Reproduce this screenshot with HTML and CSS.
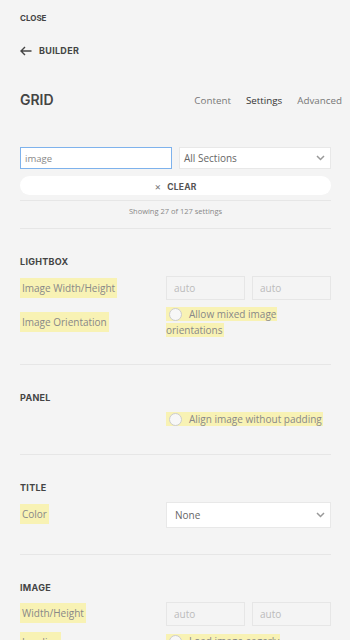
FILE: index.html
```html
<!DOCTYPE html>
<html lang="en">
  <head>
    <meta charset="UTF-8" />
    <meta name="viewport" content="width=device-width, initial-scale=1.0" />
    <title>Builder - Grid</title>
    <link rel="stylesheet" href="styles.css">
  </head>
  <body>
    <div class="sidebar">
      <a class="close-link" href="#">Close</a>

      <a class="back-link" href="#">
        <svg width="12" height="10" viewBox="0 0 12 10">
          <path d="M11.5 5H1M5 1L1 5l4 4" fill="none" stroke="#444" stroke-width="1.4" />
        </svg>
        Builder
      </a>

      <div class="title-row">
        <h2>Grid</h2>
        <ul class="tabs">
          <li>Content</li>
          <li class="active">Settings</li>
          <li>Advanced</li>
        </ul>
      </div>

      <div class="search-row">
        <input type="text" class="search-input" value="image" />
        <div class="select">
          <span>All Sections</span>
          <svg width="9" height="6" viewBox="0 0 9 6">
            <path d="M1 1l3.5 3.5L8 1" fill="none" stroke="#999" stroke-width="1.5" />
          </svg>
        </div>
      </div>
      <button class="clear-btn"><span class="x">&times;</span>Clear</button>
      <p class="count">Showing 27 of 127 settings</p>

      <div class="section">
        <h3>Lightbox</h3>
        <div class="field">
          <label><mark>Image Width/Height</mark></label>
          <div class="pair">
            <input type="text" placeholder="auto" />
            <input type="text" placeholder="auto" />
          </div>
        </div>
        <div class="field">
          <label><mark>Image Orientation</mark></label>
          <div class="check"><mark><i class="radio"></i>Allow mixed image<br />orientations</mark></div>
        </div>
      </div>

      <div class="section">
        <h3>Panel</h3>
        <div class="field">
          <label></label>
          <div class="check"><mark><i class="radio"></i>Align image without padding</mark></div>
        </div>
      </div>

      <div class="section">
        <h3>Title</h3>
        <div class="field">
          <label><mark>Color</mark></label>
          <div class="select tall">
            <span>None</span>
            <svg width="9" height="6" viewBox="0 0 9 6">
              <path d="M1 1l3.5 3.5L8 1" fill="none" stroke="#999" stroke-width="1.5" />
            </svg>
          </div>
        </div>
      </div>

      <div class="section">
        <h3>Image</h3>
        <div class="field">
          <label><mark>Width/Height</mark></label>
          <div class="pair">
            <input type="text" placeholder="auto" />
            <input type="text" placeholder="auto" />
          </div>
        </div>
        <div class="field">
          <label><mark>Loading</mark></label>
          <div class="check"><mark><i class="radio"></i>Load image eagerly</mark></div>
        </div>
      </div>
    </div>
  </body>
</html>
```

FILE: styles.css
```css
/* Basic Reset */
* {
  margin: 0;
  padding: 0;
  box-sizing: border-box;
}

body {
  background-color: #f4f4f4;
  font-family: "Open Sans", sans-serif;
  color: #666;
}

.sidebar {
  padding: 13px 19px 0 20px;
}

/* Top links */
.close-link,
.back-link {
  display: block;
  font-family: "Inter", sans-serif;
  font-size: 8px;
  font-weight: 700;
  line-height: 10px;
  text-transform: uppercase;
  color: #444;
  text-decoration: none;
}

.back-link {
  display: flex;
  align-items: center;
  gap: 7px;
  margin-top: 23px;
  font-size: 9px;
  letter-spacing: 0.3px;
}

/* Title + tabs */
.title-row {
  display: flex;
  align-items: center;
  justify-content: space-between;
  margin-top: 35px;
  margin-right: -11px;
}

.title-row h2 {
  font-family: "Inter", sans-serif;
  font-size: 14px;
  font-weight: 600;
  line-height: 18px;
  text-transform: uppercase;
  color: #444;
}

.tabs {
  display: flex;
  gap: 15px;
  list-style: none;
  font-size: 9.8px;
  color: #777;
}

.tabs .active {
  color: #333;
}

/* Search */
.search-row {
  display: flex;
  gap: 7px;
  margin-top: 38px;
}

.search-input {
  width: 152px;
  height: 22px;
  padding: 0 4px;
  border: 1px solid #7eb2ec;
  background-color: #fff;
  font-family: "Open Sans", sans-serif;
  font-size: 9.5px;
  color: #888;
  outline: none;
}

.select {
  flex: 1;
  display: flex;
  align-items: center;
  justify-content: space-between;
  height: 22px;
  padding: 0 5px 0 4px;
  border: 1px solid #e8e8e8;
  background-color: #fff;
  font-size: 10px;
  color: #666;
}

.select.tall {
  height: 26px;
  padding-left: 8px;
}

.clear-btn {
  display: block;
  width: 100%;
  height: 19px;
  margin-top: 7px;
  border: none;
  border-radius: 10px;
  background-color: #fff;
  font-family: "Inter", sans-serif;
  font-size: 8.5px;
  font-weight: 700;
  letter-spacing: 0.2px;
  text-transform: uppercase;
  color: #555;
}

.clear-btn .x {
  margin-right: 6px;
  font-size: 10px;
  font-weight: 400;
  color: #777;
}

.count {
  margin-top: 5px;
  padding: 4px 0 11px;
  border-top: 1px solid #e6e6e6;
  border-bottom: 1px solid #e6e6e6;
  text-align: center;
  font-size: 7.5px;
  line-height: 12px;
  color: #888;
}

/* Sections */
.section {
  padding: 27px 0 26px;
  border-bottom: 1px solid #e6e6e6;
}

.section h3 {
  margin-bottom: 8px;
  font-family: "Inter", sans-serif;
  font-size: 9px;
  font-weight: 700;
  line-height: 12px;
  letter-spacing: 0.3px;
  text-transform: uppercase;
  color: #444;
}

.field {
  display: grid;
  grid-template-columns: 1fr 165px;
  align-items: center;
  gap: 6px;
}

.field + .field {
  margin-top: 7px;
}

.field label {
  font-size: 10px;
  line-height: 19px;
  color: #777;
}

mark {
  background-color: #f8f2b4;
  color: #888;
  padding: 1px 1px;
}

.field label mark {
  padding: 3px 2px;
}

.pair {
  display: flex;
  gap: 7px;
}

.pair input {
  width: 79px;
  height: 24px;
  padding: 0 7px;
  border: 1px solid #e6e6e6;
  background: transparent;
  font-family: "Open Sans", sans-serif;
  font-size: 10px;
}

.pair input::placeholder {
  color: #bbb;
}

.check {
  font-size: 10px;
  line-height: 15.5px;
}

.check mark {
  padding: 0 1px 0 0;
  -webkit-box-decoration-break: clone;
  box-decoration-break: clone;
}

.radio {
  display: inline-block;
  width: 13px;
  height: 13px;
  margin: 0 7px 0 3px;
  vertical-align: -3px;
  border: 1px solid #ccc;
  border-radius: 50%;
  background-color: #f7f7f7;
}
```
